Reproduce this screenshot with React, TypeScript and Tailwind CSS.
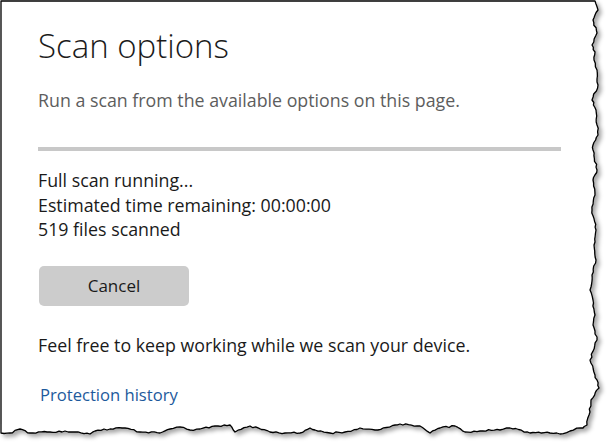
import React from 'react'

// torn-paper outline, traced from the screenshot
const rightEdge: [number, number][] = [
  [595, 1], [598, 10], [593, 20], [597, 33], [592, 45], [595, 52], [594, 60], [597, 70], [598, 85],
  [592, 100], [596, 110], [597, 125], [598, 135], [593, 145], [593, 150], [597, 170], [593, 180],
  [595, 195], [592, 210], [596, 230], [594, 245], [596, 260], [592, 275], [590, 290], [593, 300],
  [595, 315], [593, 325], [597, 340], [590, 360], [595, 375], [599, 388], [591, 400], [589, 415],
  [587, 425], [583, 428],
]
const bottomEdge: [number, number][] = [
  [580, 428], [570, 431], [560, 434], [550, 433], [530, 433], [510, 428], [500, 430], [480, 431],
  [465, 432], [455, 426], [440, 428], [430, 433], [420, 426], [400, 424], [395, 425], [375, 430],
  [360, 428], [345, 432], [330, 433], [315, 430], [310, 428], [300, 433], [285, 433], [270, 432],
  [250, 426], [235, 432], [230, 425], [215, 426], [200, 429], [190, 430], [180, 427], [170, 429],
  [160, 433], [140, 432], [125, 428], [110, 429], [95, 431], [90, 434], [75, 432], [65, 431],
  [50, 432], [30, 433], [20, 429], [10, 433], [1, 433],
]

let seed = 7
const rnd = () => {
  seed = (seed * 9301 + 49297) % 233280
  return seed / 233280 - 0.5
}

const roughen = (pts: [number, number][], vertical: boolean) => {
  const out: [number, number][] = []
  for (let i = 0; i < pts.length - 1; i++) {
    const [x1, y1] = pts[i]
    const [x2, y2] = pts[i + 1]
    const steps = Math.max(1, Math.round(Math.hypot(x2 - x1, y2 - y1) / 3))
    for (let s = 0; s < steps; s++) {
      const t = s / steps
      const j = s === 0 ? 0 : rnd() * 1.8
      out.push([x1 + (x2 - x1) * t + (vertical ? j : 0), y1 + (y2 - y1) * t + (vertical ? 0 : j)])
    }
  }
  out.push(pts[pts.length - 1])
  return out
}

const framePath = () => {
  const pts = [[1, 1] as [number, number], ...roughen(rightEdge, true), ...roughen(bottomEdge, false)]
  return 'M' + pts.map(([x, y]) => `${x.toFixed(1)},${y.toFixed(1)}`).join(' L') + ' Z'
}

const d = framePath()

const TornFrame = () => (
  <svg className="absolute inset-0" width={610} height={446} viewBox="0 0 610 446">
    <defs>
      <filter id="shadow" x="-5%" y="-5%" width="115%" height="115%">
        <feDropShadow dx="3" dy="3" stdDeviation="2" floodColor="#000" floodOpacity="0.35" />
      </filter>
    </defs>
    <path d={d} fill="#fff" stroke="#000" strokeWidth={1.3} strokeLinejoin="round" filter="url(#shadow)" />
  </svg>
)

export default function App() {
  return (
    <div className="relative w-[610px] h-[446px] bg-white overflow-hidden font-['Open_Sans',sans-serif]">
      <TornFrame />
      <div className="relative pl-[38px] pr-[49px] pt-[22px]">
        <h1 className="text-[33px] leading-[48px] font-light text-[#1b1b1b]">Scan options</h1>
        <p className="mt-[18px] text-[17.8px] leading-6 text-[#5d5d5d]">
          Run a scan from the available options on this page.
        </p>
        <div className="mt-[35px] h-1 bg-[#c8c8c8]" />
        <div className="mt-[17px] text-[17.8px] leading-[24.5px] text-[#1a1a1a]">
          <p>Full scan running...</p>
          <p>Estimated time remaining: 00:00:00</p>
          <p>519 files scanned</p>
        </div>
        <button className="mt-[24px] ml-px w-[150px] h-10 rounded-[5px] bg-[#cccccc] text-[17px] text-[#1a1a1a]">
          Cancel
        </button>
        <p className="mt-[27px] text-[17.8px] leading-6 text-[#1a1a1a]">
          Feel free to keep working while we scan your device.
        </p>
        <a className="block mt-[26px] ml-[2px] text-[16.6px] leading-6 text-[#1d5a9c]">Protection history</a>
      </div>
    </div>
  )
}
